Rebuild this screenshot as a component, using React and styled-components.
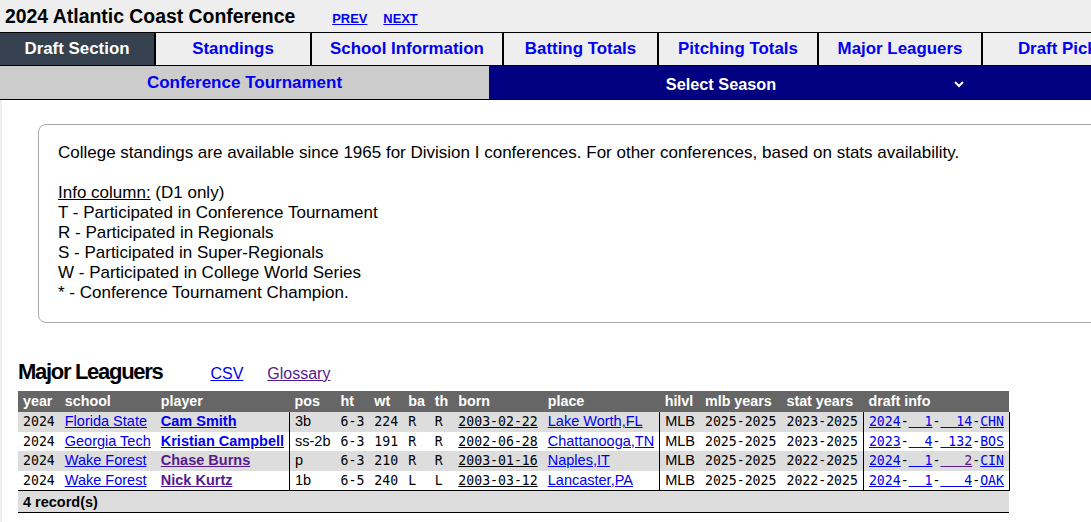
import styled, { createGlobalStyle } from "styled-components";

const GlobalStyle = createGlobalStyle`
  html, body {
    margin: 0;
    padding: 0;
    overflow: hidden;
    background: #eee;
    font-family: "Liberation Sans", Arial, sans-serif;
    color: #000;
  }
`;

const tabs = [
  { label: "Draft Section", width: 156, active: true },
  { label: "Standings", width: 156 },
  { label: "School Information", width: 192 },
  { label: "Batting Totals", width: 155 },
  { label: "Pitching Totals", width: 160 },
  { label: "Major Leaguers", width: 164 },
  { label: "Draft Picks", width: 160 },
];

const infoLines = [
  "T - Participated in Conference Tournament",
  "R - Participated in Regionals",
  "S - Participated in Super-Regionals",
  "W - Participated in College World Series",
  "* - Conference Tournament Champion.",
];

const players = [
  {
    school: "Florida State", player: "Cam Smith", pos: "3b", ht: "6-3", wt: "224", ba: "R", th: "R",
    born: "2003-02-22", place: "Lake Worth,FL", mlb: "2025-2025", stat: "2023-2025",
    draft: ["2024", "  1", "  14", "CHN"],
  },
  {
    school: "Georgia Tech", player: "Kristian Campbell", pos: "ss-2b", ht: "6-3", wt: "191", ba: "R", th: "R",
    born: "2002-06-28", place: "Chattanooga,TN", mlb: "2025-2025", stat: "2023-2025",
    draft: ["2023", "  4", " 132", "BOS"],
  },
  {
    school: "Wake Forest", player: "Chase Burns", visited: true, pos: "p", ht: "6-3", wt: "210", ba: "R", th: "R",
    born: "2003-01-16", place: "Naples,IT", mlb: "2025-2025", stat: "2022-2025",
    draft: ["2024", "  1", "   2", "CIN"], pickVisited: true,
  },
  {
    school: "Wake Forest", player: "Nick Kurtz", visited: true, pos: "1b", ht: "6-5", wt: "240", ba: "L", th: "L",
    born: "2003-03-12", place: "Lancaster,PA", mlb: "2025-2025", stat: "2022-2025",
    draft: ["2024", "  1", "   4", "OAK"],
  },
];

const headers = ["year", "school", "player", "pos", "ht", "wt", "ba", "th", "born", "place", "hilvl", "mlb years", "stat years", "draft info"];

const App = () => {
  return (
    <>
      <GlobalStyle />
      <TitleBar>
        <Title>2024 Atlantic Coast Conference</Title>
        <PageLink href="#">PREV</PageLink>
        <PageLink href="#">NEXT</PageLink>
      </TitleBar>
      <TabRow>
        {tabs.map((t) => (
          <Tab key={t.label} $width={t.width} $active={t.active}>{t.label}</Tab>
        ))}
      </TabRow>
      <SubRow>
        <SubTab>Conference Tournament</SubTab>
        <SeasonCell>
          <SeasonLabel>Select Season</SeasonLabel>
          <svg width="12" height="8" viewBox="0 0 12 8">
            <polyline points="2,2 6,6 10,2" fill="none" stroke="#fff" strokeWidth="2" />
          </svg>
        </SeasonCell>
      </SubRow>
      <Main>
        <InfoBox>
          <p>College standings are available since 1965 for Division I conferences. For other conferences, based on stats availability.</p>
          <p>&nbsp;</p>
          <p><u>Info column:</u> (D1 only)</p>
          {infoLines.map((line) => (
            <p key={line}>{line}</p>
          ))}
        </InfoBox>
        <HeadingRow>
          <Heading>Major Leaguers</Heading>
          <HeadLink href="#">CSV</HeadLink>
          <HeadLink href="#" $visited>Glossary</HeadLink>
        </HeadingRow>
        <Table>
          <thead>
            <tr>
              {headers.map((h) => (
                <Th key={h}>{h}</Th>
              ))}
            </tr>
          </thead>
          <tbody>
            {players.map((p, i) => (
              <Row key={p.player} $striped={i % 2 === 0}>
                <Td $mono>2024</Td>
                <Td><A href="#">{p.school}</A></Td>
                <Td><A href="#" $bold $visited={p.visited}>{p.player}</A></Td>
                <Td $border>{p.pos}</Td>
                <Td $mono>{p.ht}</Td>
                <Td $mono>{p.wt}</Td>
                <Td $mono>{p.ba}</Td>
                <Td $mono>{p.th}</Td>
                <Td $mono><A href="#" $plain>{p.born}</A></Td>
                <Td><A href="#">{p.place}</A></Td>
                <Td $border>MLB</Td>
                <Td $mono>{p.mlb}</Td>
                <Td $mono>{p.stat}</Td>
                <Td $mono $border $right>
                  <A href="#">{p.draft[0]}</A>-<A href="#">{p.draft[1]}</A>-<A href="#" $visited={p.pickVisited}>{p.draft[2]}</A>-<A href="#">{p.draft[3]}</A>
                </Td>
              </Row>
            ))}
          </tbody>
          <tfoot>
            <tr>
              <Footer colSpan={headers.length}>4 record(s)</Footer>
            </tr>
          </tfoot>
        </Table>
      </Main>
    </>
  );
};

const TitleBar = styled.div`
  height: 32px;
  line-height: 32px;
  padding-left: 5px;
  display: flex;
  align-items: baseline;
  background: #eee;
`;
const Title = styled.h1`
  margin: 0 37px 0 0;
  font-size: 19.4px;
  font-weight: bold;
`;
const PageLink = styled.a`
  margin-right: 16px;
  font-size: 12.9px;
  font-weight: bold;
  color: #0000ee;
`;
const TabRow = styled.nav`
  display: flex;
  border-top: 1px solid #000;
  border-bottom: 1px solid #000;
  white-space: nowrap;
`;
const Tab = styled.div`
  flex: 0 0 ${(p) => p.$width}px;
  box-sizing: border-box;
  height: 32px;
  display: flex;
  align-items: center;
  justify-content: center;
  border-right: 2px solid #000;
  background: ${(p) => (p.$active ? "#36414f" : "#eee")};
  color: ${(p) => (p.$active ? "#fff" : "#0000ee")};
  font-size: 16.9px;
  font-weight: bold;
`;
const SubRow = styled.div`
  display: flex;
  height: 33px;
  border-bottom: 1px solid #000;
`;
const SubTab = styled.div`
  flex: 0 0 489px;
  display: flex;
  align-items: center;
  justify-content: center;
  background: #ccc;
  color: #0000ee;
  font-size: 17px;
  font-weight: bold;
`;
const SeasonCell = styled.div`
  flex: 1;
  display: flex;
  align-items: center;
  padding-top: 3px;
  background: #000080;
  color: #fff;
`;
const SeasonLabel = styled.span`
  width: 464px;
  text-align: center;
  font-size: 16.3px;
  font-weight: bold;
`;
const Main = styled.main`
  background: #fff;
  border-left: 2px solid #eee;
  padding: 24px 0 40px 16px;
  min-height: 500px;
`;
const InfoBox = styled.div`
  width: 1100px;
  margin-left: 20px;
  padding: 18px 19px 19px;
  border: 1px solid #aaa;
  border-radius: 8px;
  font-size: 17px;
  line-height: 20px;

  p {
    margin: 0;
  }
`;
const HeadingRow = styled.div`
  margin-top: 36px;
  display: flex;
  align-items: baseline;
  line-height: 26px;
`;
const Heading = styled.h2`
  margin: 0 48px 0 0;
  font-size: 22px;
  letter-spacing: -1.3px;
  font-weight: bold;
`;
const HeadLink = styled.a`
  margin-right: 24px;
  font-size: 16px;
  color: ${(p) => (p.$visited ? "#551a8b" : "#0000ee")};
`;
const Table = styled.table`
  margin-top: 4px;
  border-collapse: collapse;
  font-size: 14.5px;
`;
const Th = styled.th`
  height: 21px;
  line-height: 21px;
  padding: 0 5px;
  background: #666;
  color: #fff;
  text-align: left;
  font-size: 14.3px;
  font-weight: bold;
  white-space: nowrap;
`;
const Row = styled.tr`
  background: ${(p) => (p.$striped ? "#ddd" : "#fff")};
`;
const Td = styled.td`
  height: 19.5px;
  line-height: 19px;
  padding: 0 5px;
  white-space: pre;
  font-family: ${(p) => (p.$mono ? '"DejaVu Sans Mono", monospace' : '"Liberation Sans", Arial, sans-serif')};
  font-size: ${(p) => (p.$mono ? "13.2px" : "14.5px")};
  border-left: ${(p) => (p.$border ? "1px solid #000" : "none")};
  border-right: ${(p) => (p.$right ? "1px solid #000" : "none")};
`;
const A = styled.a`
  color: ${(p) => (p.$plain ? "#000" : p.$visited ? "#551a8b" : "#0000ee")};
  font-weight: ${(p) => (p.$bold ? "bold" : "normal")};
`;
const Footer = styled.td`
  height: 21px;
  padding: 0 5px;
  background: #ddd;
  border-top: 1px solid #000;
  border-bottom: 1px solid #000;
  font-weight: bold;
`;

export default App;
